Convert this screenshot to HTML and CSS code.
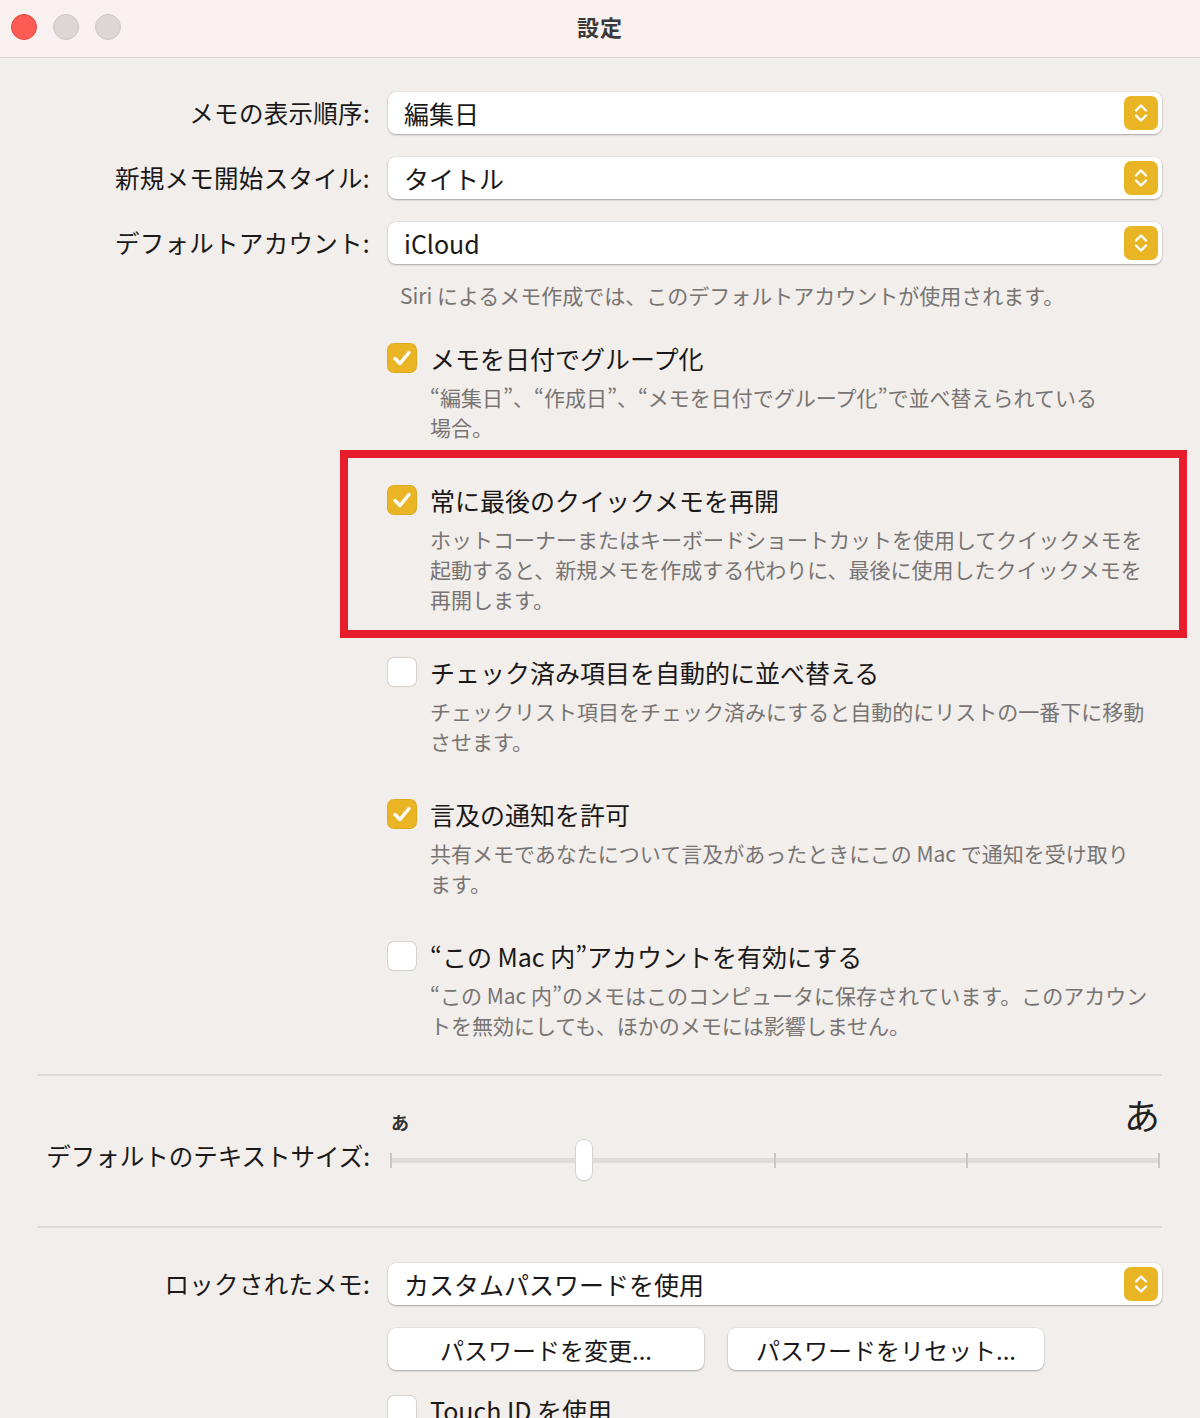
FILE: index.html
```html
<!DOCTYPE html>
<html lang="ja">
<head>
<meta charset="UTF-8">
<meta name="viewport" content="width=device-width, initial-scale=1.0">
<title>設定</title>
<link rel="stylesheet" href="styles.css">
</head>
<body>
<div class="window">
    <div class="titlebar">
        <div class="lights">
            <span class="light close"></span>
            <span class="light"></span>
            <span class="light"></span>
        </div>
        <div class="title">設定</div>
    </div>

    <div class="content">
        <div class="field">
            <div class="label">メモの表示順序:</div>
            <div class="popup">
                <span>編集日</span>
                <span class="arrows"><svg viewBox="0 0 34 34"><path d="M12 14.5 L17 9.5 L22 14.5 M12 19.5 L17 24.5 L22 19.5"/></svg></span>
            </div>
        </div>
        <div class="field">
            <div class="label">新規メモ開始スタイル:</div>
            <div class="popup">
                <span>タイトル</span>
                <span class="arrows"><svg viewBox="0 0 34 34"><path d="M12 14.5 L17 9.5 L22 14.5 M12 19.5 L17 24.5 L22 19.5"/></svg></span>
            </div>
        </div>
        <div class="field">
            <div class="label">デフォルトアカウント:</div>
            <div class="popup">
                <span>iCloud</span>
                <span class="arrows"><svg viewBox="0 0 34 34"><path d="M12 14.5 L17 9.5 L22 14.5 M12 19.5 L17 24.5 L22 19.5"/></svg></span>
            </div>
        </div>
        <p class="helper">Siri によるメモ作成では、このデフォルトアカウントが使用されます。</p>

        <div class="check-row first">
            <div class="check-title">
                <span class="box on"><svg viewBox="0 0 28 28"><path d="M7 14.5 L12 19.5 L21 8.5"/></svg></span>
                メモを日付でグループ化
            </div>
            <p class="desc">“編集日”、“作成日”、“メモを日付でグループ化”で並べ替えられている<br>場合。</p>
        </div>

        <div class="check-row highlight">
            <div class="check-title">
                <span class="box on"><svg viewBox="0 0 28 28"><path d="M7 14.5 L12 19.5 L21 8.5"/></svg></span>
                常に最後のクイックメモを再開
            </div>
            <p class="desc">ホットコーナーまたはキーボードショートカットを使用してクイックメモを<br>起動すると、新規メモを作成する代わりに、最後に使用したクイックメモを<br>再開します。</p>
        </div>

        <div class="check-row">
            <div class="check-title">
                <span class="box"></span>
                チェック済み項目を自動的に並べ替える
            </div>
            <p class="desc">チェックリスト項目をチェック済みにすると自動的にリストの一番下に移動<br>させます。</p>
        </div>

        <div class="check-row">
            <div class="check-title">
                <span class="box on"><svg viewBox="0 0 28 28"><path d="M7 14.5 L12 19.5 L21 8.5"/></svg></span>
                言及の通知を許可
            </div>
            <p class="desc">共有メモであなたについて言及があったときにこの Mac で通知を受け取り<br>ます。</p>
        </div>

        <div class="check-row">
            <div class="check-title">
                <span class="box"></span>
                “この Mac 内”アカウントを有効にする
            </div>
            <p class="desc">“この Mac 内”のメモはこのコンピュータに保存されています。このアカウン<br>トを無効にしても、ほかのメモには影響しません。</p>
        </div>

        <hr class="sep">

        <div class="field size-field">
            <div class="label size-label">デフォルトのテキストサイズ:</div>
            <div class="size-control">
                <div class="size-marks">
                    <span class="small-a">あ</span>
                    <span class="big-a">あ</span>
                </div>
                <div class="slider">
                    <div class="track"></div>
                    <div class="ticks">
                        <span></span><span></span><span></span><span></span><span></span>
                    </div>
                    <div class="knob"></div>
                </div>
            </div>
        </div>

        <hr class="sep sep-bottom">

        <div class="field">
            <div class="label">ロックされたメモ:</div>
            <div class="popup">
                <span>カスタムパスワードを使用</span>
                <span class="arrows"><svg viewBox="0 0 34 34"><path d="M12 14.5 L17 9.5 L22 14.5 M12 19.5 L17 24.5 L22 19.5"/></svg></span>
            </div>
        </div>
        <div class="buttons">
            <button class="btn">パスワードを変更...</button>
            <button class="btn">パスワードをリセット...</button>
        </div>
        <div class="check-row touch">
            <div class="check-title">
                <span class="box"></span>
                Touch ID を使用
            </div>
        </div>
    </div>
</div>
</body>
</html>
```

FILE: styles.css
```css
body {
    margin: 0;
    background: #f2eeeb;
    color: #1a1818;
    font-family: "Noto Sans CJK JP", "Noto Sans", sans-serif;
    overflow: hidden;
}
.window {
    width: 1200px;
}
.titlebar {
    height: 57px;
    background: #f9f1f0;
    border-bottom: 1px solid #dcd5d2;
    display: flex;
    align-items: center;
    justify-content: center;
    position: relative;
}
.lights {
    position: absolute;
    left: 11px;
    top: 14px;
    display: flex;
    gap: 16px;
}
.light {
    width: 24px;
    height: 24px;
    border-radius: 50%;
    background: #dcd6d6;
    border: 1px solid #cdc6c6;
}
.light.close {
    background: #fd5c55;
    border-color: #e0443e;
}
.title {
    font-size: 22px;
    line-height: 28px;
    font-weight: bold;
    color: #3b3939;
    letter-spacing: 1px;
    margin-bottom: 6px;
}
.content {
    padding: 34px 38px 0 37px;
}
.field {
    display: grid;
    grid-template-columns: 333px 1fr;
    column-gap: 18px;
    align-items: center;
    margin-bottom: 23px;
}
.label {
    text-align: right;
    font-size: 24.5px;
    line-height: 32px;
    letter-spacing: 0.3px;
    white-space: nowrap;
}
.popup {
    height: 42px;
    background: #fff;
    border-radius: 8px;
    box-shadow: 0 1px 2px rgba(0, 0, 0, 0.28), 0 0 0 0.5px rgba(0, 0, 0, 0.08);
    display: flex;
    align-items: center;
    justify-content: space-between;
    padding: 0 4px 0 16px;
    font-size: 25px;
    line-height: 38px;
}
.arrows {
    width: 34px;
    height: 34px;
    border-radius: 7px;
    background: #e9b525;
    display: flex;
}
.arrows svg {
    width: 34px;
    height: 34px;
}
.arrows path {
    fill: none;
    stroke: #fff;
    stroke-width: 2.4;
    stroke-linecap: round;
    stroke-linejoin: round;
}
.helper {
    margin: -7px 0 0 363px;
    font-size: 21px;
    line-height: 30px;
    color: #777473;
}
.check-row {
    margin: 42px 0 0 351px;
}
.check-row.first {
    margin-top: 32px;
}
.check-title {
    display: flex;
    align-items: center;
    gap: 14px;
    font-size: 25px;
    line-height: 32px;
}
.box {
    width: 28px;
    height: 28px;
    border-radius: 6px;
    background: #fff;
    box-shadow: 0 0 0 1px #d6d1cd, 0 1px 1px rgba(0, 0, 0, 0.1);
    display: flex;
    flex-shrink: 0;
}
.box.on {
    background: #e9b525;
    box-shadow: 0 0 0 1px #ddaa1e;
}
.box svg {
    width: 28px;
    height: 28px;
}
.box path {
    fill: none;
    stroke: #fff;
    stroke-width: 3.4;
    stroke-linecap: round;
    stroke-linejoin: round;
}
.desc {
    margin: 8px 0 0 42px;
    font-size: 21px;
    line-height: 30px;
    color: #777473;
    white-space: nowrap;
}
.highlight {
    position: relative;
}
.highlight::after {
    content: "";
    position: absolute;
    left: -48px;
    right: -25px;
    top: -34px;
    bottom: -24px;
    border: 8px solid #e71d2b;
}
.sep {
    border: none;
    height: 2px;
    background: #dedad6;
    margin: 34px 0 0;
}
.sep-bottom {
    margin: 44px 0 35px;
}
.size-field {
    align-items: end;
    margin-bottom: 0;
}
.size-label {
    margin-bottom: 10px;
    letter-spacing: 0;
}
.size-marks {
    display: flex;
    justify-content: space-between;
    align-items: baseline;
    padding: 18px 2px 0 2px;
}
.small-a {
    font-size: 18px;
    line-height: 24px;
    font-weight: bold;
    color: #333;
    margin-left: 1px;
}
.big-a {
    font-size: 36px;
    line-height: 40px;
    color: #222;
}
.slider {
    position: relative;
    height: 42px;
    margin-top: 6px;
}
.track {
    position: absolute;
    left: 2px;
    right: 2px;
    top: 18px;
    height: 5px;
    background: #e0dbd7;
    border-radius: 2px;
}
.ticks {
    position: absolute;
    left: 2px;
    right: 2px;
    top: 13px;
    display: flex;
    justify-content: space-between;
}
.ticks span {
    width: 2px;
    height: 15px;
    background: #cbc6c2;
}
.knob {
    position: absolute;
    left: 188px;
    top: 0;
    width: 16px;
    height: 40px;
    border-radius: 8px;
    background: #fff;
    box-shadow: 0 0 0 1px #d8d3cf, 0 1px 2px rgba(0, 0, 0, 0.2);
}
.buttons {
    display: flex;
    gap: 24px;
    margin: 1px 0 0 351px;
}
.btn {
    width: 316px;
    height: 42px;
    background: #fff;
    border: none;
    border-radius: 8px;
    box-shadow: 0 1px 2px rgba(0, 0, 0, 0.28), 0 0 0 0.5px rgba(0, 0, 0, 0.08);
    font-family: inherit;
    font-size: 24px;
    color: #1a1818;
    padding: 0;
}
.check-row.touch {
    margin-top: 24px;
}
```
